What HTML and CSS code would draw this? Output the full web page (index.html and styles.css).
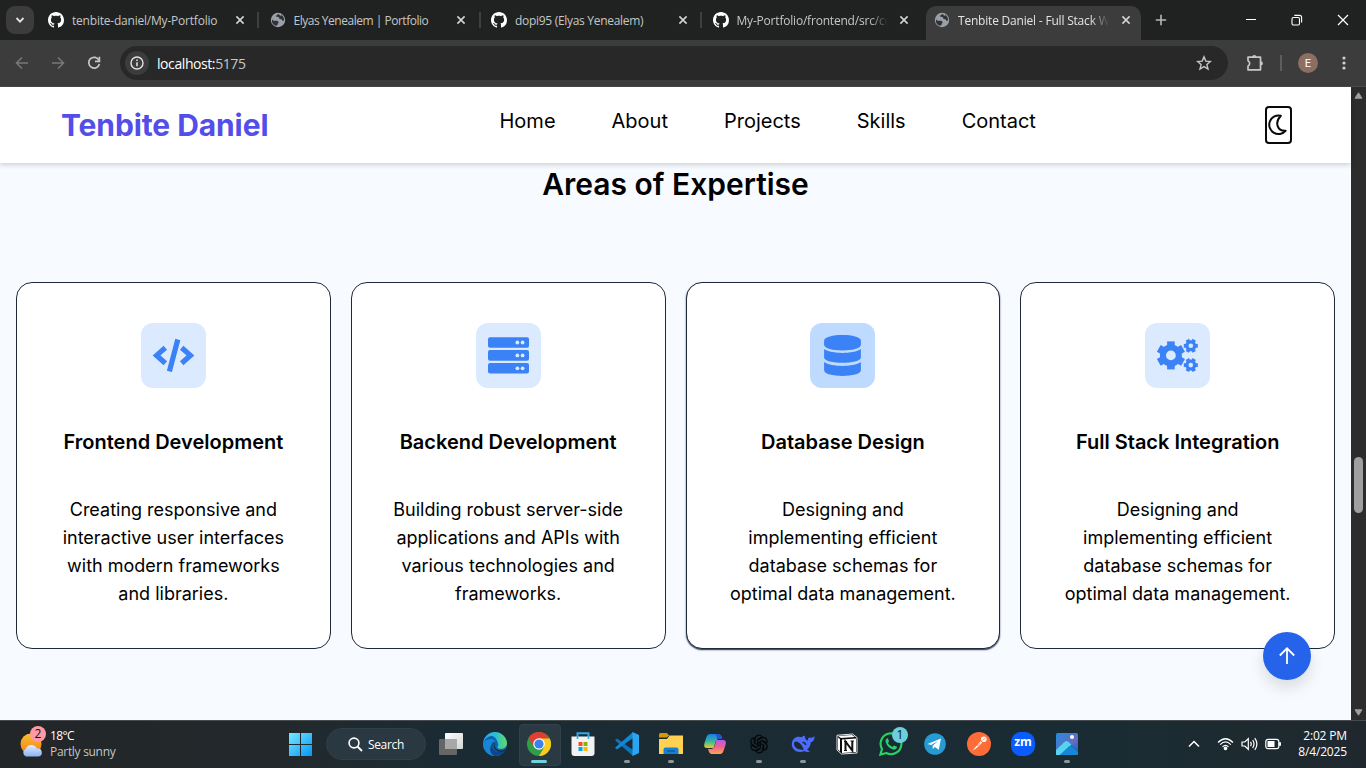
FILE: index.html
```html
<!DOCTYPE html>
<html lang="en">
<head>
<meta charset="utf-8">
<title>Tenbite Daniel - Full Stack Web Developer</title>
<link rel="stylesheet" href="styles.css">
</head>
<body>
<svg class="defs" aria-hidden="true">
  <symbol id="github" viewBox="0 0 16 16"><path fill="#fff" d="M8 0C3.58 0 0 3.58 0 8c0 3.54 2.29 6.53 5.47 7.59.4.07.55-.17.55-.38 0-.19-.01-.82-.01-1.49-2.01.37-2.53-.49-2.69-.94-.09-.23-.48-.94-.82-1.13-.28-.15-.68-.52-.01-.53.63-.01 1.08.58 1.23.82.72 1.21 1.87.87 2.33.66.07-.52.28-.87.51-1.07-1.78-.2-3.64-.89-3.64-3.95 0-.87.31-1.59.82-2.15-.08-.2-.36-1.02.08-2.12 0 0 .67-.21 2.2.82.64-.18 1.32-.27 2-.27s1.36.09 2 .27c1.53-1.04 2.2-.82 2.2-.82.44 1.1.16 1.92.08 2.12.51.56.82 1.27.82 2.15 0 3.07-1.87 3.75-3.65 3.95.29.25.54.73.54 1.48 0 1.07-.01 1.93-.01 2.2 0 .21.15.46.55.38A8.01 8.01 0 0 0 16 8c0-4.42-3.58-8-8-8Z"/></symbol>
  <symbol id="globe" viewBox="0 0 16 16"><circle cx="8" cy="8" r="7.2" fill="#9aa0a9"/><path fill="#303235" d="M2 7.2 3.4 8.7 7.2 8.8 8.9 10.2 7.9 11.2 7.8 12.6 6.2 13.8A6 6 0 0 1 2 7.2ZM8.8 2.1 6.3 3.3 6.5 5.1 8.8 5.1 9.5 6.9 11.5 7.2 12.7 9 14 8.5A6 6 0 0 0 11.2 3L10.3 4Z"/></symbol>
  <symbol id="close" viewBox="0 0 10 10"><path d="M1.4 1.4 8.6 8.6M8.6 1.4 1.4 8.6" fill="none" stroke="currentColor" stroke-width="1.6"/></symbol>
</svg>

<header class="tabbar">
  <div class="tabsearch"><svg width="10" height="8" viewBox="0 0 10 8"><path d="M1.5 2 5 5.6 8.5 2" fill="none" stroke="#e3e3e3" stroke-width="1.8"/></svg></div>
  <div class="tabs">
    <div class="tab"><svg class="fav"><use href="#github"/></svg><span class="tab-title t1">tenbite-daniel/My-Portfolio</span><svg class="x"><use href="#close"/></svg></div>
    <div class="tab"><svg class="fav"><use href="#globe"/></svg><span class="tab-title t2">Elyas Yenealem | Portfolio</span><svg class="x"><use href="#close"/></svg></div>
    <div class="tab"><svg class="fav"><use href="#github"/></svg><span class="tab-title t3">dopi95 (Elyas Yenealem)</span><svg class="x"><use href="#close"/></svg></div>
    <div class="tab nosep"><svg class="fav"><use href="#github"/></svg><span class="tab-title t4 fade">My-Portfolio/frontend/src/co</span><svg class="x"><use href="#close"/></svg></div>
    <div class="tab active"><svg class="fav"><use href="#globe"/></svg><span class="tab-title t5 fade">Tenbite Daniel - Full Stack W</span><svg class="x"><use href="#close"/></svg></div>
  </div>
  <svg class="newtab" viewBox="0 0 12 12"><path d="M6 .8V11.2M.8 6H11.2" stroke="#b5b7b8" stroke-width="1.6"/></svg>
  <div class="winctl">
    <svg width="12" height="12"><path d="M1 5.5H11" stroke="#fff"/></svg>
    <svg width="12" height="12" fill="none" stroke="#fff" stroke-width="1.1"><rect x="1" y="3.5" width="7.5" height="7.5" rx="1.4"/><path d="M3.3 1.4H8.6Q10.6 1.4 10.6 3.4V8.6"/></svg>
    <svg width="12" height="12"><path d="M1 1 11 11M11 1 1 11" stroke="#fff" stroke-width="1.2"/></svg>
  </div>
</header>

<div class="toolbar">
  <div class="navbtns">
    <svg width="14" height="14" viewBox="0 0 14 14" fill="none" stroke="#77797a" stroke-width="1.5"><path d="M13 7H1.8M7 1.5 1.5 7 7 12.5"/></svg>
    <svg width="14" height="14" viewBox="0 0 14 14" fill="none" stroke="#77797a" stroke-width="1.5"><path d="M1 7H12.2M7 1.5 12.5 7 7 12.5"/></svg>
    <svg width="14" height="14" viewBox="0 0 14 14" fill="none" stroke="#c7c7c7" stroke-width="1.7"><path d="M12 4.3A5.4 5.4 0 1 0 12.4 8"/><path d="M12.4 .8V5.3H8"/></svg>
  </div>
  <div class="omnibox">
    <span class="info"><svg width="14" height="14" viewBox="0 0 14 14"><circle cx="7" cy="7" r="6" fill="none" stroke="#e3e3e3" stroke-width="1.4"/><path d="M7 6.2V10.2M7 3.6V5" stroke="#e3e3e3" stroke-width="1.5"/></svg></span>
    <span class="url"><b>localhost:</b>5175</span>
    <svg class="star" width="16" height="16" viewBox="0 0 16 16"><path d="M8 1.9 9.8 6.1 14.4 6.5 10.9 9.6 12 14 8 11.6 4 14 5.1 9.6 1.6 6.5 6.2 6.1Z" fill="none" stroke="#c7c7c7" stroke-width="1.4"/></svg>
  </div>
  <svg class="ext" width="18" height="18" viewBox="0 0 18 18"><path d="M2 3.2H14.5V15.8H2V12.2Q5.4 9.4 2 6.6Z" fill="none" stroke="#c7c7c7" stroke-width="1.7" stroke-linejoin="round"/><path d="M6.2 3A2.1 2.1 0 0 1 10.400 3ZM14.800 7.300A2.100 2.100 0 0 1 14.800 11.500Z" fill="#c7c7c7"/></svg>
  <span class="vsep"></span>
  <span class="avatar">E</span>
  <svg class="kebab" width="4" height="16" viewBox="0 0 4 16" fill="#d0d0d0"><circle cx="2" cy="3" r="1.6"/><circle cx="2" cy="8" r="1.6"/><circle cx="2" cy="13" r="1.6"/></svg>
</div>

<div class="viewport">
  <div class="page">
    <nav class="nav">
      <div class="brand">Tenbite Daniel</div>
      <div class="links"><a>Home</a><a>About</a><a>Projects</a><a>Skills</a><a>Contact</a></div>
      <div class="mode"><svg width="22" height="24" viewBox="0 0 22 24"><path d="M13.8 2.700A9.300 9.300 0 1 0 18.600 17.800C10.500 18.300 7.200 9.800 13.800 2.700Z" fill="none" stroke="#0a0a0a" stroke-width="2" stroke-linejoin="round"/></svg></div>
    </nav>
    <h2>Areas of Expertise</h2>
    <div class="cards">
      <article class="card">
        <div class="icon"><svg viewBox="0 0 65 65" fill="none" stroke="#3b82f6" stroke-width="5.2"><path d="M24.3 24.7 15.6 32.4 24.3 40.2M40.7 24.7 49.4 32.4 40.7 40.2M36.8 16.5 28.4 48.4"/></svg></div>
        <h3>Frontend Development</h3>
        <p>Creating responsive and interactive user interfaces with modern frameworks and libraries.</p>
      </article>
      <article class="card">
        <div class="icon"><svg viewBox="0 0 65 65" fill="#3b82f6"><rect x="12" y="14.2" width="41" height="10.6" rx="2"/><rect x="12" y="27.1" width="41" height="10.6" rx="2"/><rect x="12" y="40" width="41" height="10.6" rx="2"/><g fill="#dbeafe"><circle cx="41.4" cy="19.5" r="1.9"/><circle cx="46.6" cy="19.5" r="1.9"/><circle cx="41.4" cy="32.4" r="1.9"/><circle cx="46.6" cy="32.4" r="1.9"/><circle cx="41.4" cy="45.3" r="1.9"/><circle cx="46.6" cy="45.3" r="1.9"/></g></svg></div>
        <h3>Backend Development</h3>
        <p>Building robust server-side applications and APIs with various technologies and frameworks.</p>
      </article>
      <article class="card hover">
        <div class="icon"><svg viewBox="0 0 65 65" fill="#3b82f6"><path d="M14.1 17.7C14.1 10.1 50.9 10.1 50.9 17.7V21.7C50.9 29.3 14.1 29.3 14.1 21.7ZM14.1 26C22 31.2 43 31.2 50.9 26V34.5C50.9 41.5 14.1 41.5 14.1 34.5ZM14.1 39C22 44.2 43 44.2 50.9 39V47.3C50.9 54.8 14.1 54.8 14.1 47.3Z"/></svg></div>
        <h3>Database Design</h3>
        <p>Designing and implementing efficient database schemas for optimal data management.</p>
      </article>
      <article class="card">
        <div class="icon"><svg viewBox="0 0 65 65">
          <defs><g id="gear"><circle r="8" stroke-width="6"/><path d="M0-14V14" stroke-width="7.6"/><path d="M0-14V14" stroke-width="7.6" transform="rotate(60)"/><path d="M0-14V14" stroke-width="7.6" transform="rotate(120)"/></g></defs>
          <g fill="none" stroke="#3b82f6"><use href="#gear" transform="translate(25.9 32.4)"/><use href="#gear" transform="translate(45.8 22.8) rotate(30) scale(.5)"/><use href="#gear" transform="translate(45.8 42.1) rotate(30) scale(.5)"/></g>
          <g fill="#dbeafe"><circle cx="25.9" cy="32.4" r="4.9"/><circle cx="45.8" cy="22.8" r="2.3"/><circle cx="45.8" cy="42.1" r="2.3"/></g></svg></div>
        <h3>Full Stack Integration</h3>
        <p>Designing and implementing efficient database schemas for optimal data management.</p>
      </article>
    </div>
    <div class="totop"><svg width="24" height="24" viewBox="0 0 24 24"><path d="M12 20V4.5M4.8 11.5 12 4.3 19.2 11.5" fill="none" stroke="#fff" stroke-width="1.8"/></svg></div>
  </div>
  <div class="scrollbar">
    <svg width="9" height="7" viewBox="0 0 9 7"><path d="M4.5 .8 8 6.2H1Z" fill="#9f9f9f" stroke="#9f9f9f" stroke-linejoin="round"/></svg>
    <span class="thumb"></span>
    <svg width="9" height="7" viewBox="0 0 9 7"><path d="M4.5 6.2 1 .8H8Z" fill="#9f9f9f" stroke="#9f9f9f" stroke-linejoin="round"/></svg>
  </div>
</div>

<footer class="taskbar">
  <div class="weather">
    <div class="wicon"><svg width="24" height="28" viewBox="0 0 24 28"><defs><linearGradient id="sun" x2="0" y2="1"><stop stop-color="#f9c22e"/><stop offset="1" stop-color="#f47b16"/></linearGradient><linearGradient id="cloud" x2="0" y2="1"><stop stop-color="#deecff"/><stop offset="1" stop-color="#8cb3f1"/></linearGradient></defs><circle cx="11" cy="14" r="10.5" fill="url(#sun)"/><path d="M6 26.5A4 4 0 0 1 5.8 19 6 6 0 0 1 17 18.6 4 4 0 0 1 18.5 26.5Z" fill="url(#cloud)"/></svg><span class="wbadge">2</span></div>
    <div class="wtext"><span class="temp">18°C</span><span class="sky">Partly sunny</span></div>
  </div>
  <div class="apps">
    <svg class="start" width="23" height="23" viewBox="0 0 23 23"><defs><linearGradient id="win" x2="1" y2="1"><stop stop-color="#75e9ff"/><stop offset="1" stop-color="#0596f5"/></linearGradient></defs><path fill="url(#win)" d="M0 0H11V11H0ZM12 0H23V11H12ZM0 12H11V23H0ZM12 12H23V23H12Z"/></svg>
    <div class="search"><svg width="15" height="15" viewBox="0 0 15 15"><circle cx="6" cy="6" r="4.9" fill="none" stroke="#fff" stroke-width="1.6"/><path d="M9.5 9.5 14 14" stroke="#fff" stroke-width="1.8"/></svg><span>Search</span></div>
    <div class="app"><svg viewBox="0 0 24 24"><defs><linearGradient id="tv" x2="1" y2="1"><stop stop-color="#fff"/><stop offset="1" stop-color="#d5d5d5"/></linearGradient></defs><rect x="6" y="1" width="18" height="16" rx="1" fill="url(#tv)"/><rect x="0" y="7" width="18" height="16" rx="1" fill="#666"/><rect x="6" y="7" width="12" height="10" fill="#a8a8a8"/></svg></div>
    <div class="app"><svg viewBox="0 0 24 24"><defs><linearGradient id="e1" x2="1"><stop stop-color="#2ba5e8"/><stop offset=".55" stop-color="#2cc1d3"/><stop offset="1" stop-color="#65dc5a"/></linearGradient></defs><circle cx="12" cy="12" r="12" fill="#0c63b6"/><path d="M.1 11A12 12 0 0 1 24 11C24 17 17 18 14.7 16 13.5 14.8 16 14 15 11.5 12-.5 3 4 .1 11Z" fill="url(#e1)"/><path d="M.1 11C3 6 11 6 12.5 9.5 6 9 6 21 17 23A12 12 0 0 1 .1 11Z" fill="#1686d5"/><path d="M12 10C6 15 11 22 21.7 19A12 12 0 0 1 12 24C5 22 6 12 12 10Z" fill="#0b478f"/><path d="M12.3 10.1C10.5 13.5 12 17.5 17 18.5 19.5 18.8 21.5 17.5 23 16.4L21.8 19C14 22.5 7.5 15 12.3 10.1Z" fill="#1b2b33"/></svg></div>
    <div class="app current on"><svg viewBox="0 0 24 24"><circle cx="12" cy="12" r="12" fill="#2f9e49"/><path d="M1.6 6A12 12 0 0 1 22.4 6L12 8.2 7 15Z" fill="#e33c31"/><path d="M12 6.5H22.7A12 12 0 0 1 12 24L17.3 15Z" fill="#fdcb20"/><circle cx="12" cy="12" r="5.8" fill="#fff"/><circle cx="12" cy="12" r="4.6" fill="#3b82ec"/></svg></div>
    <div class="app"><svg viewBox="0 0 24 24"><path d="M6.500 6V1.200H17.500V6" fill="none" stroke="#31a9e8" stroke-width="2"/><path d="M.5 4.500H23.500V21Q23.500 24 20.500 24H3.500Q.5 24 .5 21Z" fill="#f2f2f2"/><path d="M6.500 4V7M17.500 4V7" stroke="#31a9e8" stroke-width="1.600"/><path fill="#f25022" d="M7.500 10h4v4h-4z"/><path fill="#7fba00" d="M12.500 10h4v4h-4z"/><path fill="#00a4ef" d="M7.500 15h4v4h-4z"/><path fill="#ffb900" d="M12.500 15h4v4h-4z"/></svg></div>
    <div class="app on"><svg viewBox="0 0 24 24"><path d="M0 8.200 2 6.500 18 18V24Z" fill="#0b74bf"/><path d="M0 15.800 2 17.500 18 6V0Z" fill="#1388d2"/><path d="M17.500 0 24 3V21L17.500 24Z" fill="#2ca5f1"/></svg></div>
    <div class="app on"><svg viewBox="0 0 24 24"><path d="M0 2.500Q0 1 1.500 1H8L10.500 4H0Z" fill="#d79604"/><path d="M0 7H8L10.500 3.500H24V22H0Z" fill="#ffd152"/><path d="M0 3.500H9.500L8 5.500H0Z" fill="#d79604"/><path d="M4.500 22V17.500Q4.500 15.500 6.500 15.500H17.500Q19.500 15.500 19.500 17.500V22Z" fill="#1480d1"/><path d="M8 19H16" stroke="#0b5ca4" stroke-width="1.500"/></svg></div>
    <div class="app"><svg viewBox="0 0 24 24"><defs><linearGradient id="c1" x2="0" y2="1"><stop stop-color="#1b7ce8"/><stop offset=".5" stop-color="#32b5a4"/><stop offset="1" stop-color="#e6cf20"/></linearGradient><linearGradient id="c2" x2="0" y2="1"><stop stop-color="#b35ce8"/><stop offset=".5" stop-color="#f0618c"/><stop offset="1" stop-color="#ffa552"/></linearGradient></defs><path d="M7 2H15Q18 2 19 6L16 7Q13.500 7 12.500 10L10.500 16H4Q0 16 1.500 11L3.500 5Q4.500 2 7 2Z" fill="url(#c1)"/><path d="M12 2H15Q18 2 19 7H14Q14 3 12 2Z" fill="#2356c8"/><path d="M17 22H9Q6 22 5 17L8 17Q10.500 17 11.500 14L13.500 8H20Q24 8 22.500 13L20.500 19Q19.500 22 17 22Z" fill="url(#c2)"/></svg></div>
    <div class="app on"><svg viewBox="-14 -14 28 28" fill="none" stroke="#05090b" stroke-width="1.500"><g id="knot"><path d="M-4.500-2.600V-6.500A4.300 4.300 0 0 1 3.400-8.300L-1.500-5.400V1.500"/></g><use href="#knot" transform="rotate(60)"/><use href="#knot" transform="rotate(120)"/><use href="#knot" transform="rotate(180)"/><use href="#knot" transform="rotate(240)"/><use href="#knot" transform="rotate(300)"/></svg></div>
    <div class="app on"><svg viewBox="0 0 24 24"><path d="M.8 12C1 6 6 3.500 11 5.200 12.500 3 13.800 3.500 14 4.500 14 7 15.500 8.500 17 8.700 16.500 6 18 5.500 19 5.500 21 6 22 5.500 23.500 4 23.800 8.500 21.500 10 19.800 10.300 19.500 14 18 16 16 17.500L19 19.500Q15.500 20.500 13.500 19C7 22 .5 18 .8 12Z" fill="#4d6bfe"/><path d="M3 12C3 8.500 7 9 10 12.500 12 15 12 16.500 13 17.500 8 18.500 3.500 16 3 12Z" fill="#1b2b33"/><path d="M11.500 10.500Q14 10 14.800 13" fill="none" stroke="#1b2b33" stroke-width="1.500"/></svg></div>
    <div class="app"><svg viewBox="0 0 24 24"><path d="M2 3.300 17.500 2 22 5.500V21L6.500 22 2 18Z" fill="#0b0b0b" stroke="#fff" stroke-width=".9"/><path d="M3 4 17 3 20 5 6 6ZM3 5.500 5 7V19.500L3 17.500Z" fill="#fff"/><path d="M7 7.500 21 6.500V20L7 21Z" fill="#fff"/><path d="M10.500 18.500V9.500L17.300 18.500V9" fill="none" stroke="#111" stroke-width="2"/><path d="M9 9.500H12M15.500 9H19M9 18.500H12" stroke="#111"/></svg></div>
    <div class="app"><svg viewBox="0 0 24 24"><path d="M1.400 22.600 3 17A10.400 10.400 0 1 1 7.200 21Z" fill="none" stroke="#25d366" stroke-width="2.100"/><path d="M8 6.200Q6 7.500 6.600 10C8 14.200 11 17 15 17.800 17.500 17.500 18 16 17.900 14.800L15 13.400 13.500 15.100Q10.500 13.900 9 11L10 9.500 9 6.500Z" fill="#25d366"/></svg><span class="abadge">1</span></div>
    <div class="app"><svg viewBox="0 0 24 24"><circle cx="12" cy="12" r="10.800" fill="#259bd2"/><path d="M4.500 12 18 6.600 15.800 17.700 11.800 15 9.800 17 9.600 13.700 15 9 8.200 13.100Z" fill="#fff"/></svg></div>
    <div class="app"><svg viewBox="0 0 24 24"><circle cx="12" cy="12" r="12" fill="#ff6c37"/><path d="M6 18 9 14.500 13.500 9.200 15.200 10.700 9 16.500 5 19Z" fill="#fff"/><circle cx="16.800" cy="7.200" r="2.800" fill="#fff"/><path d="M15.500 8.300 18.500 6M10 14 13.500 11" stroke="#ff6c37" stroke-width=".7"/></svg></div>
    <div class="app"><svg viewBox="0 0 24 24"><rect width="24" height="24" rx="10" fill="#0b5cff"/></svg><span class="zm">zm</span></div>
    <div class="app on"><svg viewBox="0 0 24 24"><defs><linearGradient id="ph" x2="1" y2="1"><stop stop-color="#258bdc"/><stop offset=".6" stop-color="#666bc1"/><stop offset="1" stop-color="#195fbb"/></linearGradient></defs><rect x="1" y="1" width="22" height="22" rx="1.500" fill="url(#ph)"/><path d="M1 18 9.500 9.800Q11.500 8 13.500 9.800L23 19V21.500Q23 23 21.500 23H2.500Q1 23 1 21.500Z" fill="#1268bd"/><path d="M1 18 9.500 9.800Q11.500 8 13.500 9.800L16.500 12.800 5 23H1Z" fill="#55d3f1"/><path d="M5 23 14 14.200Q15.500 13 17 14.400L23 20V23Z" fill="#1687d4"/><circle cx="17" cy="5" r="2" fill="#fff"/></svg></div>
  </div>
  <div class="tray">
    <svg class="chev" width="12" height="8" viewBox="0 0 12 8"><path d="M1 6.500 6 1.500 11 6.500" fill="none" stroke="#fff" stroke-width="1.500"/></svg>
    <svg width="17" height="14" viewBox="0 0 17 14" fill="none" stroke="#fff" stroke-width="1.200"><path d="M1 5.500Q8.500-2 16 5.500M3.200 7.600Q8.500 2.300 13.800 7.600M5.500 9.800Q8.500 6.800 11.500 9.800"/><circle cx="8.500" cy="11.300" r="1.300" fill="#fff"/></svg>
    <svg width="17" height="14" viewBox="0 0 17 14" fill="none" stroke="#fff" stroke-width="1.200"><path d="M1 5H3.800L7.300 1.700V12.300L3.800 9H1ZM9.500 4.800Q11 7 9.500 9.200M11.700 3Q14.300 7 11.700 11M13.800 1.200Q18 7 13.800 12.800"/></svg>
    <svg width="17" height="12" viewBox="0 0 17 12"><rect x=".8" y="1.300" width="13" height="9.400" rx="2.200" fill="none" stroke="#fff" stroke-width="1.200"/><rect x="2.500" y="3" width="7" height="6" fill="#fff"/><path d="M15 4.300V7.700" stroke="#fff" stroke-width="2"/></svg>
    <div class="clock"><span class="time">2:02 PM</span><span class="date">8/4/2025</span></div>
  </div>
</footer>
</body>
</html>
```
FILE: styles.css
```css
* { box-sizing: border-box; }
body { margin: 0; width: 1366px; height: 768px; overflow: hidden; display: flex; flex-direction: column; background: #3c3c3c; font-family: "Open Sans", "Noto Sans", sans-serif; }
svg { display: block; flex: none; }
.defs { position: absolute; width: 0; height: 0; }

.tabbar { height: 40px; flex: none; background: #202221; display: flex; align-items: center; padding-left: 6px; }
.tabsearch { width: 28px; height: 28px; border-radius: 9px; background: #3c3c3c; display: flex; align-items: center; justify-content: center; }
.tabs { display: flex; width: 1107px; margin-left: 3.5px; height: 40px; }
.tab { position: relative; width: 221.5px; flex: none; display: flex; align-items: center; padding: 0 14.5px 0 10.5px; color: #c5c7c6; }
.tab::after { content: ""; position: absolute; right: 0; top: 12px; width: 2px; height: 16px; background: #3d4040; }
.nosep::after, .active::after { display: none; }
.fav { width: 16px; height: 16px; }
.tab-title { margin: 2px 0 0 8px; width: 154px; white-space: nowrap; font-size: 12px; line-height: 18px; }
.fade { -webkit-mask-image: linear-gradient(90deg, #000 86%, transparent 98%); mask-image: linear-gradient(90deg, #000 86%, transparent 98%); }
.x { width: 10px; height: 10px; margin-left: auto; color: #d3d3d3; }
.active { color: #e3e3e3; }
.active::before { content: ""; position: absolute; left: 2.5px; top: 6px; width: 215px; height: 34px; border-radius: 10px 10px 0 0; background: #3c3c3c; }
.active > * { position: relative; }
.t1 { letter-spacing: -.21px; }
.t2 { letter-spacing: -.48px; }
.t3 { letter-spacing: -.3px; }
.t4, .t5 { letter-spacing: -.2px; }
.newtab { width: 12px; height: 12px; margin-left: 10px; }
.winctl { display: flex; gap: 34px; margin: 0 17px 0 auto; }

.toolbar { height: 47px; flex: none; background: #3c3c3c; border-bottom: 1px solid #4a4a4a; display: flex; align-items: center; padding-left: 15px; }
.navbtns { display: flex; gap: 22px; }
.omnibox { width: 1108px; height: 34px; margin-left: 19px; border-radius: 17px; background: #282828; display: flex; align-items: center; padding: 0 16px 0 5px; }
.info { width: 24px; height: 24px; border-radius: 50%; background: #3c3c3c; display: flex; align-items: center; justify-content: center; }
.url { margin-left: 8px; font-size: 14px; letter-spacing: -.42px; color: #c7c7c7; }
.url b { font-weight: 400; color: #fff; }
.star { margin-left: auto; }
.ext { margin-left: 18px; }
.vsep { width: 2px; height: 16px; margin-left: 16px; background: #5c5d5d; }
.avatar { width: 20px; height: 20px; margin-left: 16px; border-radius: 50%; background: #8d6e63; color: #fff; font: 11px/21px Roboto, sans-serif; text-align: center; }
.kebab { margin-left: 24px; }

.viewport { height: 633px; flex: none; display: flex; }
.page { position: relative; width: 1351px; background: #f7faff; font-family: Inter, sans-serif; color: #000; }
.nav { position: relative; height: 76px; background: #fff; box-shadow: 0 2px 5px rgba(0,0,0,.17); display: grid; grid-template-columns: 438.5px 1fr auto; align-items: center; padding: 0 59px 0 61px; }
.brand { font-size: 30px; font-weight: 700; letter-spacing: -.1px; color: #534eea; line-height: 36px; }
.links { display: flex; gap: 56px; font-size: 20px; line-height: 28px; margin-top: -8px; }
.mode { width: 27px; height: 38px; border: 2px solid #0a0a0a; border-radius: 4px; display: flex; align-items: center; }
.page h2 { margin: 3px 0 0; font-size: 30px; line-height: 36px; font-weight: 600; text-align: center; }
.cards { display: grid; grid-template-columns: repeat(4, 1fr); gap: 20px; padding: 80px 16px 0; }
.card { height: 367px; background: #fff; border: 1px solid #1e2939; border-radius: 16px; padding: 40px; display: flex; flex-direction: column; align-items: center; text-align: center; }
.hover { box-shadow: 0 1px 1.5px #1e2952; }
.icon { width: 65px; height: 65px; border-radius: 12px; background: #dbeafe; }
.hover .icon { background: #bedbff; }
.card h3 { margin: 40px 0 0; font-size: 20px; line-height: 28px; font-weight: 600; white-space: nowrap; }
.card p { margin: 40px 0 0; font-size: 18px; line-height: 28px; }
.totop { position: absolute; left: 1263px; top: 545px; width: 48px; height: 48px; border-radius: 50%; background: #2563eb; display: flex; align-items: center; justify-content: center; box-shadow: 0 8px 15px rgba(0,0,0,.12); }
.scrollbar { width: 15px; background: #2c2c2c; display: flex; flex-direction: column; align-items: center; padding: 5px 0 4px; }
.thumb { width: 9px; height: 56px; border-radius: 5px; background: #9f9f9f; margin: 358px 0 auto; }

.taskbar { height: 48px; flex: none; position: relative; display: flex; color: #fff; border-top: 1px solid #454b4e; background: linear-gradient(90deg, #222628 0, #22292c 280px, #1b2b33 450px, #1a2c33 1120px, #20282e 1366px); }
.weather { width: 289px; height: 46px; padding-left: 20px; display: flex; align-items: center; }
.wicon { position: relative; }
.wbadge { position: absolute; left: 10px; top: -4px; width: 16px; height: 16px; border-radius: 50%; background: #ff99a4; color: #111; font-size: 12px; line-height: 16px; text-align: center; }
.wtext { margin-left: 6px; display: flex; flex-direction: column; font-size: 12px; line-height: 16px; }
.temp { letter-spacing: -.6px; }
.sky { color: #c3c6c8; letter-spacing: -.3px; }
.apps { display: flex; align-items: center; height: 46px; }
.search { width: 100px; height: 32px; margin: 0 3px 0 14px; border-radius: 16px; background: #293841; border: 1px solid #30404a; display: flex; align-items: center; padding-left: 21px; gap: 5px; font-size: 12px; letter-spacing: -.35px; }
.app { position: relative; width: 44px; height: 46px; display: flex; align-items: center; justify-content: center; }
.app svg { width: 24px; height: 24px; position: relative; }
.on::after { content: ""; position: absolute; bottom: 4px; left: 19px; width: 6px; height: 3px; border-radius: 2px; background: #8c969b; }
.current::before { content: ""; position: absolute; left: 2px; top: 3px; width: 40px; height: 40px; border-radius: 4px; background: #2b3a42; border: 1px solid #33424a; }
.current::after { left: 14px; width: 16px; background: #70d3db; }
.abadge { position: absolute; left: 23px; top: 6px; width: 16px; height: 16px; border-radius: 50%; background: #6bd0d9; color: #111; font-size: 12px; line-height: 16px; text-align: center; }
.zm { position: absolute; inset: 13px 0 auto; text-align: center; font: 700 12px/16px "Open Sans", sans-serif; }
.tray { height: 46px; margin-left: auto; padding-right: 19px; display: flex; align-items: center; gap: 7px; }
.chev { margin-right: 10px; }
.clock { width: 58px; display: flex; flex-direction: column; text-align: right; font-size: 12px; line-height: 16px; letter-spacing: -.15px; white-space: nowrap; }
```
